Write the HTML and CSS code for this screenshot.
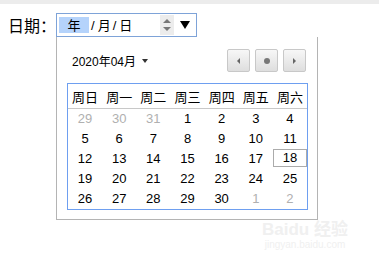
FILE: index.html
```html
<!DOCTYPE html>
<html lang="zh-CN">
<head>
  <meta charset="UTF-8" />
  <title>日期选择</title>
  <link rel="stylesheet" href="styles.css">
</head>
<body>
  <div class="topbar"></div>

  <div class="field">
    <label class="field-label" for="date">日期：</label>
    <div class="date-input" id="date">
      <span class="seg seg-active">年</span>
      <span class="sep">/</span>
      <span class="seg">月</span>
      <span class="sep">/</span>
      <span class="seg">日</span>
      <span class="spin">
        <span class="spin-up"></span>
        <span class="spin-down"></span>
      </span>
      <span class="drop"></span>
    </div>
  </div>

  <div class="picker">
    <div class="picker-head">
      <div class="month">2020年04月 <span class="caret"></span></div>
      <div class="nav">
        <button class="nav-btn"><span class="arr-left"></span></button>
        <button class="nav-btn"><span class="dot"></span></button>
        <button class="nav-btn"><span class="arr-right"></span></button>
      </div>
    </div>

    <div class="cal">
      <div class="cal-head">
        <span>周日</span><span>周一</span><span>周二</span><span>周三</span><span>周四</span><span>周五</span><span>周六</span>
      </div>
      <div class="cal-body">
        <span class="other">29</span><span class="other">30</span><span class="other">31</span><span>1</span><span>2</span><span>3</span><span>4</span>
        <span>5</span><span>6</span><span>7</span><span>8</span><span>9</span><span>10</span><span>11</span>
        <span>12</span><span>13</span><span>14</span><span>15</span><span>16</span><span>17</span><span class="today">18</span>
        <span>19</span><span>20</span><span>21</span><span>22</span><span>23</span><span>24</span><span>25</span>
        <span>26</span><span>27</span><span>28</span><span>29</span><span>30</span><span class="other">1</span><span class="other">2</span>
      </div>
    </div>
  </div>

  <div class="watermark">
    <div class="wm-logo">Bai<span class="wm-du">du</span> 经验</div>
    <div class="wm-url">jingyan.baidu.com</div>
  </div>
</body>
</html>
```

FILE: styles.css
```css
* {
  margin: 0;
  padding: 0;
  box-sizing: border-box;
}

body {
  font-family: "Liberation Sans", "Noto Sans CJK SC", sans-serif;
  background: #fff;
  color: #000;
  width: 379px;
  height: 263px;
  position: relative;
  overflow: hidden;
}

.topbar {
  height: 4px;
  background: #ececec;
}

.field {
  display: flex;
  align-items: center;
  margin-top: 9px;
  padding-left: 8px;
}

.field-label {
  font-family: "Noto Sans CJK SC", sans-serif;
  font-size: 16px;
  width: 48px;
  line-height: 24px;
}

.date-input {
  width: 141px;
  height: 24px;
  border: 1px solid #7ea3d8;
  display: flex;
  align-items: center;
  padding-left: 2px;
  font-family: "Noto Sans CJK SC", sans-serif;
  font-size: 13px;
}

.seg {
  line-height: 16px;
}

.seg-active {
  background: #b5d3fb;
  width: 30px;
  text-align: center;
}

.sep {
  padding: 0 3px 0 2px;
  font-family: "Liberation Sans", sans-serif;
}

.spin {
  margin-left: auto;
  width: 14px;
  height: 20px;
  background: #ececec;
  display: flex;
  flex-direction: column;
  align-items: center;
  justify-content: center;
  gap: 4px;
}

.spin-up {
  border-left: 4px solid transparent;
  border-right: 4px solid transparent;
  border-bottom: 4px solid #777;
}

.spin-down {
  border-left: 4px solid transparent;
  border-right: 4px solid transparent;
  border-top: 4px solid #777;
}

.drop {
  margin: 0 6px 0 6px;
  border-left: 5px solid transparent;
  border-right: 5px solid transparent;
  border-top: 8px solid #000;
}

.picker {
  margin-left: 56px;
  width: 262px;
  height: 183px;
  border: 1px solid #b4b4b4;
  border-top: none;
  padding: 12px 10px 10px 10px;
}

.picker-head {
  display: flex;
  align-items: center;
  justify-content: space-between;
  height: 23px;
  margin-bottom: 11px;
}

.month {
  padding-left: 5px;
  font-size: 12px;
  display: flex;
  align-items: center;
  gap: 6px;
}

.caret {
  border-left: 3px solid transparent;
  border-right: 3px solid transparent;
  border-top: 4px solid #333;
}

.nav {
  display: flex;
  gap: 5px;
  padding-right: 1px;
}

.nav-btn {
  width: 23px;
  height: 23px;
  border: 1px solid #c8c8c8;
  border-radius: 2px;
  background: linear-gradient(#f7f7f7, #dedede);
  display: flex;
  align-items: center;
  justify-content: center;
}

.arr-left {
  border-top: 3px solid transparent;
  border-bottom: 3px solid transparent;
  border-right: 3px solid #666;
}

.arr-right {
  border-top: 3px solid transparent;
  border-bottom: 3px solid transparent;
  border-left: 3px solid #666;
}

.dot {
  width: 6px;
  height: 6px;
  border-radius: 50%;
  background: #777;
}

.cal {
  border: 1px solid #6e9ff0;
  width: 241px;
}

.cal-head {
  display: grid;
  grid-template-columns: repeat(7, 1fr);
  height: 25px;
  border-bottom: 1px solid #c8c8c8;
  font-family: "Noto Sans CJK SC", sans-serif;
  font-size: 13px;
  align-items: center;
  text-align: center;
}

.cal-body {
  display: grid;
  grid-template-columns: repeat(7, 1fr);
  grid-auto-rows: 20px;
  font-size: 13px;
  text-align: center;
}

.cal-body span {
  line-height: 20px;
}

.cal-body .other {
  color: #b0b0b0;
}

.cal-body .today {
  border: 1px solid #ababab;
  line-height: 16px;
  height: 18px;
}

.watermark {
  position: absolute;
  left: 262px;
  top: 220px;
  color: #f0f0f0;
  text-align: center;
}

.wm-logo {
  font-family: "Liberation Sans", "Noto Sans CJK SC", sans-serif;
  font-size: 17px;
  font-weight: bold;
  line-height: 19px;
}

.wm-url {
  font-size: 10px;
  line-height: 12px;
}
```
